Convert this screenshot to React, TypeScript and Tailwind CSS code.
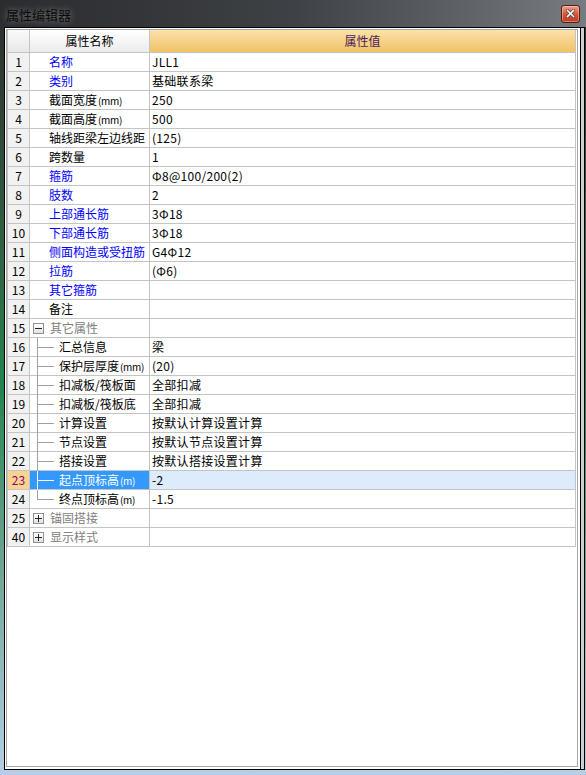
import React from "react";

type Row = {
	no: string;
	name: string;
	unit?: string;
	value?: string;
	tone?: "blue" | "black" | "group";
	kind?: "top" | "group-open" | "group-closed" | "child" | "child-last";
	selected?: boolean;
};

const rows: Row[] = [
	{ no: "1", name: "名称", value: "JLL1", tone: "blue" },
	{ no: "2", name: "类别", value: "基础联系梁", tone: "blue" },
	{ no: "3", name: "截面宽度", unit: "(mm)", value: "250" },
	{ no: "4", name: "截面高度", unit: "(mm)", value: "500" },
	{ no: "5", name: "轴线距梁左边线距", value: "(125)" },
	{ no: "6", name: "跨数量", value: "1" },
	{ no: "7", name: "箍筋", value: "Φ8@100/200(2)", tone: "blue" },
	{ no: "8", name: "肢数", value: "2", tone: "blue" },
	{ no: "9", name: "上部通长筋", value: "3Φ18", tone: "blue" },
	{ no: "10", name: "下部通长筋", value: "3Φ18", tone: "blue" },
	{ no: "11", name: "侧面构造或受扭筋", value: "G4Φ12", tone: "blue" },
	{ no: "12", name: "拉筋", value: "(Φ6)", tone: "blue" },
	{ no: "13", name: "其它箍筋", tone: "blue" },
	{ no: "14", name: "备注" },
	{ no: "15", name: "其它属性", tone: "group", kind: "group-open" },
	{ no: "16", name: "汇总信息", value: "梁", kind: "child" },
	{ no: "17", name: "保护层厚度", unit: "(mm)", value: "(20)", kind: "child" },
	{ no: "18", name: "扣减板/筏板面", value: "全部扣减", kind: "child" },
	{ no: "19", name: "扣减板/筏板底", value: "全部扣减", kind: "child" },
	{ no: "20", name: "计算设置", value: "按默认计算设置计算", kind: "child" },
	{ no: "21", name: "节点设置", value: "按默认节点设置计算", kind: "child" },
	{ no: "22", name: "搭接设置", value: "按默认搭接设置计算", kind: "child" },
	{ no: "23", name: "起点顶标高", unit: "(m)", value: "-2", kind: "child", selected: true },
	{ no: "24", name: "终点顶标高", unit: "(m)", value: "-1.5", kind: "child-last" },
	{ no: "25", name: "锚固搭接", tone: "group", kind: "group-closed" },
	{ no: "40", name: "显示样式", tone: "group", kind: "group-closed" },
];

const ExpandBox = ({ open }: { open: boolean }) => (
	<span className="w-[11px] h-[11px] border border-[#919191] bg-gradient-to-b from-white to-[#e2e2e2] flex items-center justify-center relative">
		<span className="absolute w-[7px] h-[1px] bg-[#222]" />
		{!open && <span className="absolute w-[1px] h-[7px] bg-[#222]" />}
	</span>
);

const NameCell = ({ row }: { row: Row }) => {
	const kind = row.kind ?? "top";
	const color = row.selected
		? "text-white"
		: row.tone === "blue"
			? "text-[#0000ff]"
			: row.tone === "group"
				? "text-[#808080]"
				: "text-black";
	const lineColor = row.selected ? "bg-white" : "bg-[#a0a0a0]";

	return (
		<div
			className={`w-[120px] h-full border-r border-[#c4c4c4] flex items-center relative ${
				row.selected ? "bg-[#3399ff]" : "bg-white"
			}`}
		>
			{kind === "top" && <span className="w-[19px] shrink-0" />}
			{(kind === "group-open" || kind === "group-closed") && (
				<span className="pl-[3px] pr-[6px] flex items-center">
					<ExpandBox open={kind === "group-open"} />
				</span>
			)}
			{(kind === "child" || kind === "child-last") && (
				<>
					<span
						className={`absolute left-[7px] top-0 w-[1px] ${lineColor} ${
							kind === "child-last" ? "h-[10px]" : "h-[19px]"
						}`}
					/>
					<span className={`absolute left-[7px] top-[9px] w-[17px] h-[1px] ${lineColor}`} />
					<span className="w-[29px] shrink-0" />
				</>
			)}
			<span className={`whitespace-nowrap text-[12px] leading-none ${color}`}>
				{row.name}
				{row.unit && <span className="text-[10px] ml-[1px] tracking-[-0.3px]">{row.unit}</span>}
			</span>
		</div>
	);
};

const TableRow = ({ row }: { row: Row }) => (
	<div className="flex h-[19px] border-b border-[#c4c4c4]">
		<div
			className={`w-[22px] h-full border-r border-[#c4c4c4] flex items-center justify-center text-[12px] leading-none ${
				row.selected ? "bg-[#fcd28f] text-[#7a0a7a]" : "bg-[#f2f2f2] text-black"
			}`}
		>
			{row.no}
		</div>
		<NameCell row={row} />
		<div
			className={`w-[426px] h-full border-r border-[#c4c4c4] flex items-center pl-[2px] text-[12px] leading-none text-black whitespace-nowrap tracking-[0.3px] ${
				row.selected ? "bg-[#ddecfd]" : "bg-white"
			}`}
		>
			{row.value}
		</div>
	</div>
);

const PropertyTable = () => (
	<div className="w-[569px] border-l border-[#c4c4c4]">
		<div className="flex h-[23px] border-b border-[#c4c4c4]">
			<div className="w-[22px] h-full border-r border-[#c4c4c4] bg-gradient-to-b from-[#fafafa] to-[#e8e8e8]" />
			<div className="w-[120px] h-full border-r border-[#c4c4c4] bg-gradient-to-b from-white to-[#ececec] flex items-center justify-center text-[12px] text-black">
				属性名称
			</div>
			<div className="w-[426px] h-full border-r border-[#c4c4c4] bg-gradient-to-b from-[#fbe2aa] to-[#f1c263] flex items-center justify-center text-[12px] text-[#4a1a5c]">
				属性值
			</div>
		</div>
		{rows.map((row) => (
			<TableRow key={row.no} row={row} />
		))}
	</div>
);

const CloseButton = () => (
	<button className="w-[19px] h-[18px] rounded-[3px] border border-[#5a1a10] bg-gradient-to-b from-[#f0a08a] via-[#d8553a] to-[#c0391f] flex items-center justify-center shadow-[inset_0_0_0_1px_rgba(255,255,255,0.35)]">
		<svg width="9" height="9" viewBox="0 0 9 9">
			<path d="M1.5 1.5 L7.5 7.5 M7.5 1.5 L1.5 7.5" stroke="#3a3a3a" strokeWidth="3" strokeLinecap="square" />
			<path d="M1.5 1.5 L7.5 7.5 M7.5 1.5 L1.5 7.5" stroke="#ffffff" strokeWidth="1.6" strokeLinecap="square" />
		</svg>
	</button>
);

export default function App() {
	return (
		<div
			className="w-[586px] h-[775px] flex flex-col bg-gradient-to-b from-[#2c2c2c] via-[#23834f] to-[#b6cfe8] overflow-hidden"
			style={{ fontFamily: '"Noto Sans CJK SC", "Liberation Sans", sans-serif' }}
		>
			<div className="h-[27px] shrink-0 flex items-center justify-between pl-[6px] pr-[6px] bg-gradient-to-r from-[#2a2c2f] via-[#3e4145] to-[#777c80]">
				<span className="text-[13px] pt-[2px] text-[#0a0a0a] [text-shadow:0_0_6px_rgba(255,255,255,0.45)]">
					属性编辑器
				</span>
				<CloseButton />
			</div>
			<div className="ml-[4px] w-[581px] h-[743px] shrink-0 border-t border-l border-r border-b border-black bg-white flex">
				<div className="pt-[1px] pl-[1px] flex">
					<div className="w-[572px] h-[738px] border border-[#a8a8a8] bg-white">
						<PropertyTable />
					</div>
				</div>
				<div className="w-[2px]" />
				<div className="w-[1px] h-full bg-black" />
				<div className="w-[3px] h-full bg-[#cfcfcf]" />
			</div>
		</div>
	);
}
